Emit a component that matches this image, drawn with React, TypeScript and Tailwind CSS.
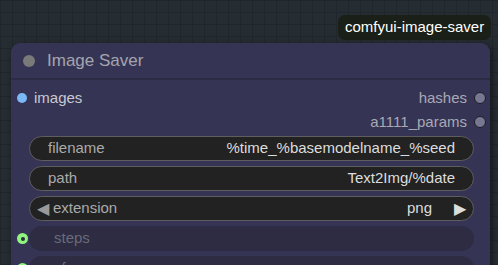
import React from "react";

type Widget = {
  label: string;
  value?: string;
  combo?: boolean;
  disabled?: boolean;
};

const widgets: Widget[] = [
  { label: "filename", value: "%time_%basemodelname_%seed" },
  { label: "path", value: "Text2Img/%date" },
  { label: "extension", value: "png", combo: true },
  { label: "steps", disabled: true },
  { label: "cfg", disabled: true },
];

const WidgetRow: React.FC<{ w: Widget }> = ({ w }) => {
  if (w.disabled) {
    return (
      <div className="relative flex items-center h-[25px] rounded-full bg-[#2d2c42] pl-[25px] text-[15px] text-[#6a6a7a] shrink-0">
        <span className="absolute -left-[12px] top-[7px] w-[11px] h-[11px] rounded-full bg-[#8ff57f] flex items-center justify-center">
          <span className="w-[4px] h-[4px] rounded-full bg-[#2d2c42]" />
        </span>
        {w.label}
      </div>
    );
  }
  return (
    <div className="flex items-center h-[25px] rounded-full bg-[#222222] border border-[#5e5e5e] text-[15px] shrink-0">
      {w.combo ? (
        <>
          <span className="text-[#9a9a9a] text-[16px] leading-none pl-[7px] pr-[4px]">◀</span>
          <span className="text-[#aaaaaa]">{w.label}</span>
          <span className="ml-auto text-[#dddddd]">{w.value}</span>
          <span className="text-[#dddddd] text-[16px] leading-none pl-[22px] pr-[7px]">▶</span>
        </>
      ) : (
        <>
          <span className="pl-[18px] text-[#aaaaaa]">{w.label}</span>
          <span className="ml-auto pr-[18px] text-[#dddddd]">{w.value}</span>
        </>
      )}
    </div>
  );
};

export default function App() {
  return (
    <div
      className="relative w-[498px] h-[265px] overflow-hidden bg-[#252c32] bg-[linear-gradient(#20262b_1px,transparent_1px),linear-gradient(90deg,#20262b_1px,transparent_1px)] bg-[size:12px_12px]"
      style={{ fontFamily: '"Liberation Sans", Arial, sans-serif' }}
    >
      {/* badge */}
      <div className="absolute left-[338px] top-[15px] h-[25px] px-[7px] flex items-center rounded-[7px] bg-[#1a2017] text-white text-[15px]">
        comfyui-image-saver
      </div>

      {/* node */}
      <div className="absolute left-[11px] top-[43px] w-[479px] h-[240px] rounded-t-[9px] bg-[#353455] shadow-[2px_2px_6px_rgba(0,0,0,0.45)] flex flex-col">
        <div className="h-[37px] flex items-center gap-[12px] pl-[12px] border-b-[2px] border-[#2c2b45] shrink-0">
          <span className="w-[12px] h-[12px] rounded-full bg-[#7a7a7a]" />
          <span className="text-[17px] text-[#a5a5ad]">Image Saver</span>
        </div>

        <div className="flex items-center justify-between h-[24px] mt-[6px] pl-[6px] pr-[4px] text-[15px] shrink-0">
          <div className="flex items-center gap-[7px]">
            <span className="w-[10px] h-[10px] rounded-full bg-[#7cb8f6]" />
            <span className="text-[#c9c9d2]">images</span>
          </div>
          <div className="flex items-center gap-[7px]">
            <span className="text-[#a9a9b2]">hashes</span>
            <span className="w-[12px] h-[12px] rounded-full bg-[#787791] border border-[#1e1e28]" />
          </div>
        </div>
        <div className="flex items-center justify-end h-[24px] pr-[4px] text-[15px] shrink-0">
          <div className="flex items-center gap-[7px]">
            <span className="text-[#a9a9b2]">a1111_params</span>
            <span className="w-[12px] h-[12px] rounded-full bg-[#787791] border border-[#1e1e28]" />
          </div>
        </div>

        <div className="flex flex-col gap-[5px] mt-[2px] pl-[18px] pr-[16px]">
          {widgets.map((w) => (
            <WidgetRow key={w.label} w={w} />
          ))}
        </div>
      </div>
    </div>
  );
}
